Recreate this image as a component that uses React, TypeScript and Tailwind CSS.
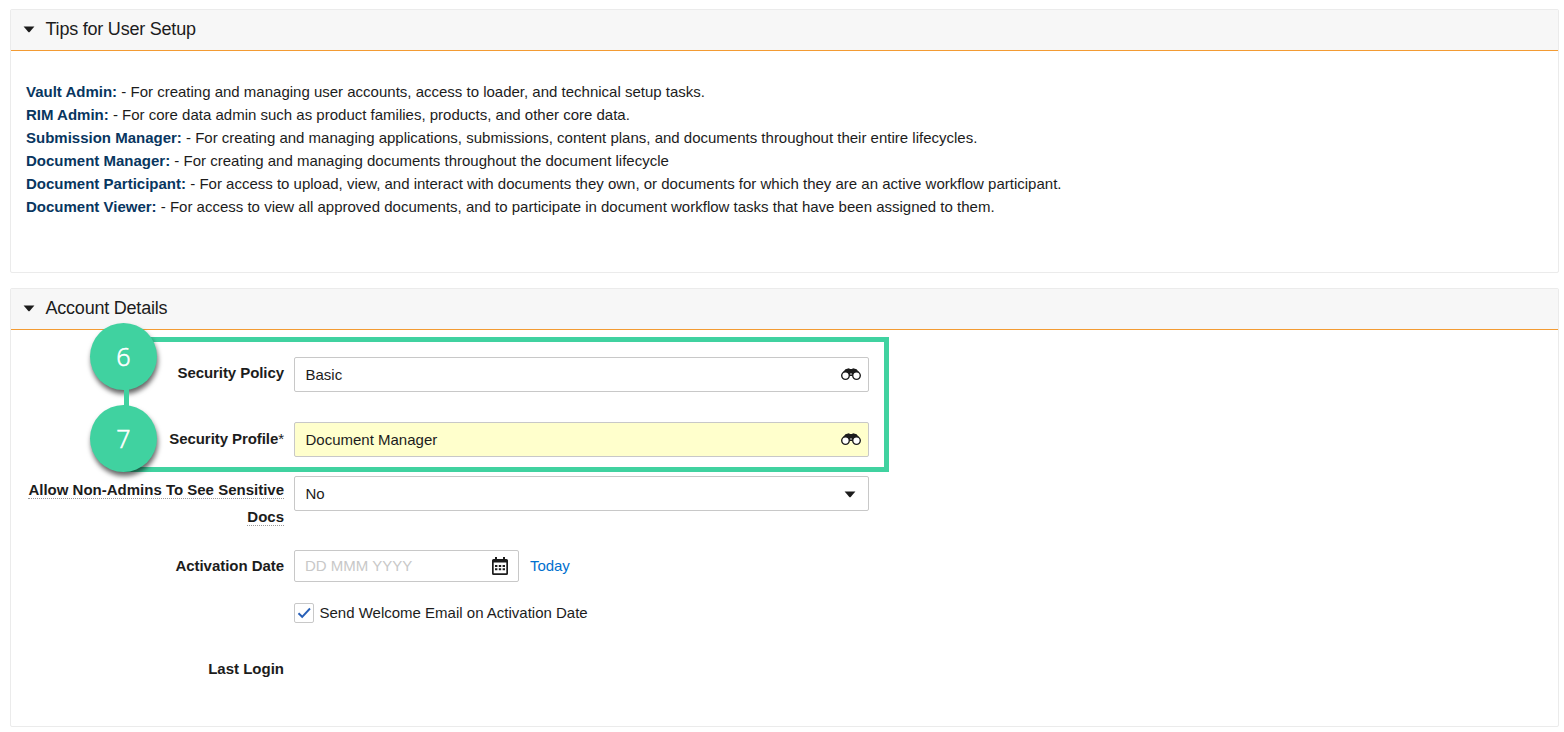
import type { ReactNode } from 'react';

const tips = [
  { role: 'Vault Admin:', text: 'For creating and managing user accounts, access to loader, and technical setup tasks.' },
  { role: 'RIM Admin:', text: 'For core data admin such as product families, products, and other core data.' },
  { role: 'Submission Manager:', text: 'For creating and managing applications, submissions, content plans, and documents throughout their entire lifecycles.' },
  { role: 'Document Manager:', text: 'For creating and managing documents throughout the document lifecycle' },
  { role: 'Document Participant:', text: 'For access to upload, view, and interact with documents they own, or documents for which they are an active workflow participant.' },
  { role: 'Document Viewer:', text: 'For access to view all approved documents, and to participate in document workflow tasks that have been assigned to them.' },
];

function Caret() {
  return (
    <svg width="12" height="7" viewBox="0 0 12 7" className="shrink-0">
      <path d="M0.6 0.4H11.4L6.9 5.8Q6 6.8 5.1 5.8Z" fill="#1c1c1c" />
    </svg>
  );
}

function Binoculars() {
  return (
    <svg width="20" height="13" viewBox="0 0 20 13" className="shrink-0">
      <path d="M2.2 4 4.4 1.2 7.9 .3 9 1.1H11L12.1.3 15.6 1.2 17.8 4 15.5 5 12.2 6.2 11.5 8H8.5L7.8 6.2 4.5 5Z" fill="#1c1c1c" />
      <circle cx="4.5" cy="7.6" r="3.8" fill="#fff" stroke="#1c1c1c" strokeWidth="1.4" />
      <circle cx="15.5" cy="7.6" r="3.8" fill="#fff" stroke="#1c1c1c" strokeWidth="1.4" />
      <path d="M5.4 3.2Q8 4 8.3 6.2H11.7Q12 4 14.6 3.2L13 1.3H7Z" fill="#1c1c1c" />
      <circle cx="10" cy="6" r="0.8" fill="#fff" />
    </svg>
  );
}

function Calendar() {
  return (
    <svg width="16" height="18" viewBox="0 0 16 18" className="shrink-0">
      <path d="M3 0H5V2H11V0H13V2H14.5Q16 2 16 3.5V16.5Q16 18 14.5 18H1.5Q0 18 0 16.5V3.5Q0 2 1.5 2H3ZM1.7 5.6V16.3H14.3V5.6Z" fill="#1c1c1c" fillRule="evenodd" />
      <path d="M3 8h2.4v2H3zM6.8 8h2.4v2H6.8zM10.6 8H13v2h-2.4zM3 11.3h2.4v2H3zM6.8 11.3h2.4v2H6.8zM10.6 11.3H13v2h-2.4z" fill="#1c1c1c" />
    </svg>
  );
}

function Panel({ title, className, children }: { title: string; className: string; children: ReactNode }) {
  return (
    <section className={`flex flex-col rounded-[2px] border border-[#ebebeb] ${className}`}>
      <h2 className="flex h-[41px] shrink-0 items-center gap-[10.5px] border-b border-[#f39b33] bg-[#f7f7f7] pb-px pl-3 text-[18px] font-normal tracking-[-0.22px]">
        <span className="mt-[-1px]"><Caret /></span>
        {title}
      </h2>
      {children}
    </section>
  );
}

function Label({ children }: { children: ReactNode }) {
  return <div className="w-[273px] shrink-0 text-right font-bold leading-[27px]">{children}</div>;
}

function Step({ value, className }: { value: string; className: string }) {
  return (
    <div className={`absolute flex size-[67px] items-center justify-center rounded-full font-['Open_Sans',sans-serif] text-[25px] font-light text-white [-webkit-text-stroke:0.6px_white] shadow-[1px_4px_5px_rgba(0,0,0,0.6)] bg-[#40d2a0] ${className}`}>
      {value}
    </div>
  );
}

const field = 'ml-[10px] flex h-[35px] w-[575px] items-center justify-between rounded-[2px] border border-[#c8c8c8] pl-[10.5px]';

export default function App() {
  return (
    <main className="h-[732px] w-[1564px] overflow-hidden bg-white pl-[10px] pt-[9px] font-['Liberation_Sans',Arial,sans-serif] text-[15px] text-[#1c1c1c]">
      <Panel title="Tips for User Setup" className="h-[264px] w-[1549px]">
        <ul className="pl-[15px] pt-[29px] leading-[23px]">
          {tips.map((tip) => (
            <li key={tip.role} className="whitespace-nowrap">
              <b className="text-[#08365f]">{tip.role}</b> - {tip.text}
            </li>
          ))}
        </ul>
      </Panel>
      <Panel title="Account Details" className="relative mt-[15px] h-[439px] w-[1549px]">
        <div className="absolute left-[113px] top-[48px] h-[135px] w-[765px] border-[5px] border-[#40d2a0]" />
        <Step value="6" className="left-[79px] top-[34px]" />
        <Step value="7" className="left-[79px] top-[116px]" />
        <div className="absolute left-[113px] top-[99px] h-[19px] w-[5px] bg-[#40d2a0]" />
        <form className="flex flex-col">
          <div className="mt-[27px] flex h-[35px]">
            <Label><div className="mt-[2px] tracking-[-0.07px]">Security Policy</div></Label>
            <div className={`${field} bg-white pr-[7px]`}><span className="pt-[2px]">Basic</span><Binoculars /></div>
          </div>
          <div className="mt-[30px] flex h-[35px]">
            <Label><div className="mt-[3px] tracking-[-0.07px]">Security Profile<span className="font-normal">*</span></div></Label>
            <div className={`${field} bg-[#ffffcc] pr-[7px]`}><span className="pt-[2px]">Document Manager</span><Binoculars /></div>
          </div>
          <div className="mt-[19px] flex h-[54px]">
            <Label><span className="border-b border-dotted border-[#999]">Allow Non-Admins To See Sensitive Docs</span></Label>
            <div className={`${field} bg-white pr-3`}><span className="pt-[2px]">No</span><span className="pt-px"><Caret /></span></div>
          </div>
          <div className="mt-[20px] flex h-[32px] items-center">
            <Label><div className="mb-[2px] tracking-[-0.04px]">Activation Date</div></Label>
            <div className="ml-[10px] flex h-[32px] w-[225px] items-center justify-between rounded-[2px] border border-[#c8c8c8] pl-[10px] pr-[10px]">
              <span className="text-[#c8c8c8]">DD MMM YYYY</span>
              <Calendar />
            </div>
            <span className="ml-[11px] tracking-[-0.1px] text-[#0070cf]">Today</span>
          </div>
          <div className="ml-[283px] mt-[21px] flex h-5 items-center gap-[5.5px]">
            <span className="flex size-5 items-center justify-center rounded-[2px] border border-[#c8c8c8]">
              <svg width="14" height="12" viewBox="0 0 14 12"><path d="M1.5 6.2 5.2 9.8 13 1.5" fill="none" stroke="#2860b8" strokeWidth="1.9" /></svg>
            </span>
            Send Welcome Email on Activation Date
          </div>
          <div className="mt-[32px] flex"><Label>Last Login</Label></div>
        </form>
      </Panel>
    </main>
  );
}
